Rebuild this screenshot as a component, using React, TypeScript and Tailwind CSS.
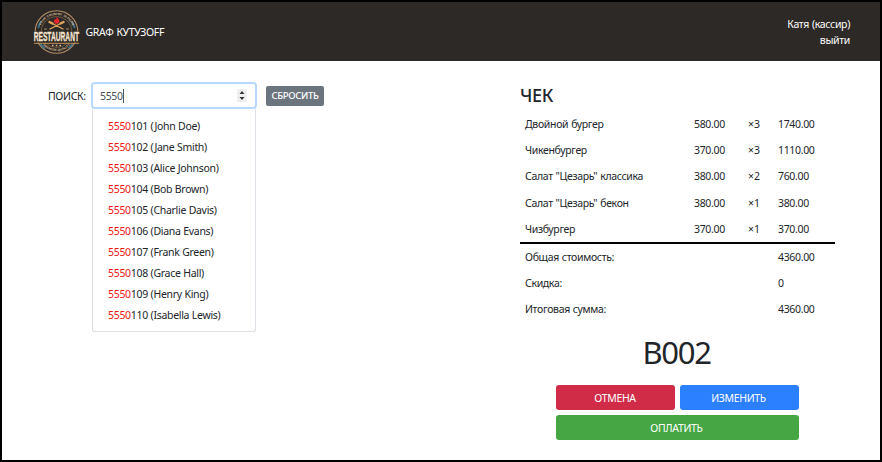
import React from 'react';

const guests = [
  ['101', '(John Doe)'],
  ['102', '(Jane Smith)'],
  ['103', '(Alice Johnson)'],
  ['104', '(Bob Brown)'],
  ['105', '(Charlie Davis)'],
  ['106', '(Diana Evans)'],
  ['107', '(Frank Green)'],
  ['108', '(Grace Hall)'],
  ['109', '(Henry King)'],
  ['110', '(Isabella Lewis)'],
];

const items = [
  ['Двойной бургер', '580.00', '3', '1740.00'],
  ['Чикенбургер', '370.00', '3', '1110.00'],
  ['Салат "Цезарь" классика', '380.00', '2', '760.00'],
  ['Салат "Цезарь" бекон', '380.00', '1', '380.00'],
  ['Чизбургер', '370.00', '1', '370.00'],
];

const totals = [
  ['Общая стоимость:', '4360.00'],
  ['Скидка:', '0'],
  ['Итоговая сумма:', '4360.00'],
];

function Logo() {
  return (
    <svg className="h-[46px] w-[48px] shrink-0 overflow-visible" viewBox="0 0 48 46">
      <defs>
        <path id="arcTop" d="M6.500 23a17 17 0 0 1 34 0" />
        <path id="arcBottom" d="M4.500 23a19 19 0 0 0 38 0" />
      </defs>
      <circle cx="23.500" cy="23" r="21.300" fill="none" stroke="#b38d66" strokeWidth="1.100" />
      <circle cx="23.500" cy="23" r="15.500" fill="none" stroke="#8d6b4b" strokeWidth="0.700" />
      <path d="M5.300 19A18.500 18.500 0 0 1 8 12.500M41.700 19A18.500 18.500 0 0 0 39 12.500" stroke="#3e7791" strokeWidth="1.800" fill="none" />
      <path d="M7.500 35A20 20 0 0 0 12 39.500M39.500 35A20 20 0 0 1 35 39.500" stroke="#3e7791" strokeWidth="1.500" fill="none" />
      <text fontSize="3.100" fontWeight="700" fill="#dcbf9f" textAnchor="middle" fontFamily="Liberation Sans, sans-serif" letterSpacing="0">
        <textPath href="#arcTop" startOffset="50%">YOUR COUNTRY SLOGAN</textPath>
      </text>
      <text fontSize="3.200" fontWeight="700" fill="#d3b595" textAnchor="middle" fontFamily="Liberation Sans, sans-serif" letterSpacing="0">
        <textPath href="#arcBottom" startOffset="50%">PREMIUM QUALITY</textPath>
      </text>
      <g stroke="#e0a35c" strokeLinecap="round" fill="none">
        <path d="M16.500 13l13.500 7M30.500 13l-13.500 7" strokeWidth="1.400" />
        <path d="M16.500 13l3 1.500M30.500 13l-3 1.500" strokeWidth="2.400" />
      </g>
      <path d="M23.700 7.700c.7 1.600 3.100 2.500 2.600 5-.3 1.400-1.400 2.100-2.700 2.100s-2.700-.8-2.700-2.400c0-1.300.8-1.800 1.100-2.600.5.4.7.8.8 1.200.6-.9.900-1.900.900-3.300z" fill="#e3242d" />
      <path d="M11 20h3M33 20h3" stroke="#a88765" strokeWidth="1.200" />
      <rect x="0" y="22" width="47" height="11.500" fill="#2d2926" />
      <path d="M1 34.300h45" stroke="#c39560" strokeWidth="1" />
      <text x="0.700" y="32.300" fontSize="13.300" fontWeight="700" fill="#f8e6d2" stroke="#f8e6d2" strokeWidth="0.350" letterSpacing="0" textLength="45.300" lengthAdjust="spacingAndGlyphs" fontFamily="Liberation Sans Narrow, Liberation Sans, sans-serif">
        RESTAURANT
      </text>
      <path d="M19 36.500h1.500M22.800 36.500h1.500M26.500 36.500h1.500" stroke="#d8bda0" strokeWidth="1.300" />
    </svg>
  );
}

export default function App() {
  return (
    <div className="h-[462px] w-[882px] overflow-hidden border-2 border-black bg-white font-['Noto_Sans','Open_Sans',sans-serif] text-[10.5px] leading-4 tracking-[-0.33px] text-[#212529] [word-spacing:0.5px]">
      <header className="flex h-[59px] items-center bg-[#2d2926] pr-[30px] pl-[31px] text-white">
        <Logo />
        <span className="ml-[4.5px] tracking-[-0.36px]">GRAФ КУТУЗOFF</span>
        <div className="ml-auto text-right">
          <div>Катя (кассир)</div>
          <div>выйти</div>
        </div>
      </header>

      <main className="flex">
        <section className="w-[518px] pt-[21px] pl-[46px]">
          <div className="flex items-center">
            <span className="w-[43px] whitespace-nowrap">ПОИСК:</span>
            <div className="flex h-[27px] w-[166px] items-center rounded-[4px] border-[2.5px] border-[#b8d8ff] bg-white pr-[8px] pl-[7px]">
              <span className="text-[#495057]">5550</span>
              <span className="h-[14px] w-px bg-[#555]" />
              <span className="ml-auto flex h-[13px] w-[10px] items-center justify-center bg-[#efefef]">
                <svg className="h-[9px] w-[6px]" viewBox="0 0 6 9" fill="#333">
                  <path d="M3 0L5.500 3H0.500zM3 9L0.500 6h5z" />
                </svg>
              </span>
            </div>
            <button className="ml-[9px] h-[20px] w-[58px] rounded-[2px] bg-[#6c757d] text-[9.5px] font-medium whitespace-nowrap text-white">СБРОСИТЬ</button>
          </div>
          <ul className="ml-[44px] h-[223px] w-[164px] rounded-b-[3px] border border-t-0 border-[#dcdfe3] pt-[7px] pl-[15px] tracking-[-0.3px] [word-spacing:0.2px]">
            {guests.map(([n, name]) => (
              <li key={n} className="h-[21px] leading-[21px] whitespace-nowrap">
                <span className="text-[#f01414]">5550</span>
                {n} {name}
              </li>
            ))}
          </ul>
        </section>

        <section className="w-[315px] pt-[22px]">
          <h1 className="h-[28px] text-[18px] leading-[24px] font-medium">ЧЕК</h1>
          <div className="border-b-2 border-black">
            {items.map(([name, price, count, sum]) => (
              <div key={name} className="flex h-[26.2px] items-center pl-[5px]">
                <span className="w-[169px]">{name}</span>
                <span className="w-[54px]">{price}</span>
                <span className="w-[30px] tracking-[0px]">×{count}</span>
                <span>{sum}</span>
              </div>
            ))}
          </div>
          {totals.map(([name, sum]) => (
            <div key={name} className="flex h-[26.2px] items-center pl-[5px]">
              <span className="w-[253px]">{name}</span>
              <span>{sum}</span>
            </div>
          ))}
          <div className="mt-[9px] h-[40px] pr-[2px] text-center text-[31px] leading-[40px] font-normal tracking-[-1.3px]">B002</div>
          <div className="mt-[13px] ml-[36px] grid w-[243px] grid-cols-2 gap-[5px] text-white">
            <button className="h-[25px] rounded-[3px] bg-[#d02c48] pt-px pr-px">ОТМЕНА</button>
            <button className="h-[25px] rounded-[3px] bg-[#2b80ff] pt-px pr-[2px]">ИЗМЕНИТЬ</button>
            <button className="col-span-2 h-[25px] rounded-[3px] bg-[#46a644] pt-px pr-[2px]">ОПЛАТИТЬ</button>
          </div>
        </section>
      </main>
    </div>
  );
}
